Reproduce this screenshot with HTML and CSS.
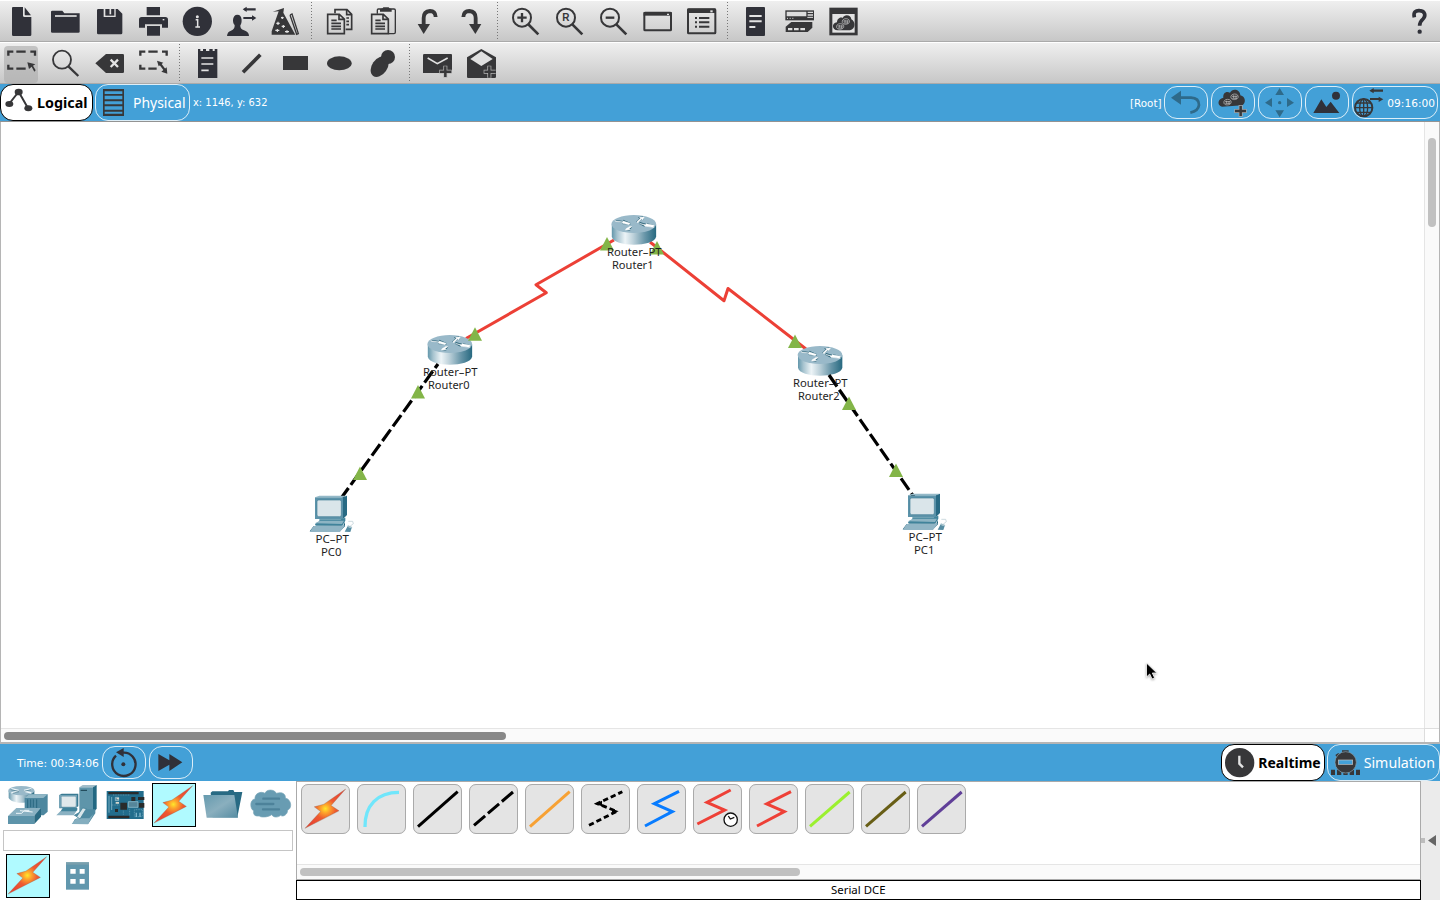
FILE: index.html
```html
<!DOCTYPE html>
<html lang="en">
<head>
<meta charset="utf-8">
<title>Network Simulator</title>
<link rel="stylesheet" href="styles.css">
</head>
<body>
<svg class="defs" width="0" height="0">
  <defs>
    <linearGradient id="metal"><stop offset="0" stop-color="#6397ab"/><stop offset=".12" stop-color="#a6c3cf"/><stop offset=".3" stop-color="#edf4f7"/><stop offset=".48" stop-color="#bed2db"/><stop offset=".75" stop-color="#6795a8"/><stop offset="1" stop-color="#276980"/></linearGradient>
    <linearGradient id="folder" x1="0" y1="0" x2="1" y2="1"><stop offset="0" stop-color="#659aae"/><stop offset=".5" stop-color="#8aafbe"/><stop offset="1" stop-color="#568ca2"/></linearGradient>
    <radialGradient id="spark"><stop offset="0" stop-color="#ffe72c"/><stop offset=".22" stop-color="#fda32c"/><stop offset=".52" stop-color="#ee5a31"/><stop offset="1" stop-color="#e94632"/></radialGradient>
    <symbol id="bolt" viewBox="0 0 124 120" overflow="visible"><path d="M123 0L79 50L103 66L0 119L47 68L28 54L57 46Z" fill="url(#spark)" stroke="#8c6a55" stroke-width="1"/></symbol>
    <g id="router">
      <path d="M-66 2V39C-62 71 62 71 67 39V2Z" fill="url(#metal)"/>
      <ellipse cy="1" rx="67" ry="27" fill="#99b9c9"/>
      <path d="M-54-11L-32-8L-32-12L-10-2L-11 4L-35 1L-32-3L-56-7ZM6-5L17-16L12-19L28-22L30-12L26-15L15-5ZM62 9L34 6L32 9L15 0L18-5L39 1L38-2L60 4ZM-25 19L-10 8L-5 11L-13 20L-9 22Z" fill="#245e74"/>
      <path d="M-57-9L-34-5L-32-8L-11-1L-14 3L-33-1L-35-5L-55-7ZM9-6L20-16L17-19L31-20L27-12L24-15L12-3ZM59 11L32 7L31 4L17-1L20 0L35 3L37 0L61 5ZM-23 15L-11 8L-6 9L-14 15L-11 18L-25 19Z" fill="#fff" stroke="#fff" stroke-width="1.5"/>
    </g>
    <g id="pc">
      <path d="M45 352L58 347H140L129 352Z" fill="#94b9c8"/><path d="M45 352H129V417H45Z" fill="#5c93aa"/><path d="M129 352L141 347V405L129 417Z" fill="#286a84"/>
      <rect x="51" y="360" width="73" height="50" rx="5" fill="#dae5ea" stroke="#447e95" stroke-width="2"/>
      <path d="M58 418H122L136 413V422L127 437H47L45 432L58 424Z" fill="#40839b"/><path d="M45 430L60 422H132L126 432Z" fill="#8db4c3"/><path d="M41 438L130 437L135 425V439L123 451L29 454Z" fill="#25657c"/><path d="M41 438H124L131 433L134 438L120 456H29Z" fill="#91b5c5"/><path d="M134 455L142 440L155 444L151 456Z" fill="#568da3"/><path d="M141 440L144 436L157 441L155 445Z" fill="#9ebdc9"/><path d="M145 424H158L160 431L149 440" fill="none" stroke="#b3c8d0" stroke-width="2"/>
    </g>
    <path id="up" d="M0 0L7 13.5H-7Z" fill="#83b548"/>
    <g id="gear"><path d="M0-9C8-9 12-4 10 2C7 9-8 10-11 3C-13-4-8-9 0-9Z" fill="none" stroke="#c9c9c9" stroke-width="2"/><path d="M-8-2H8M-7 4H7M-3-5V3M4-4V5" stroke="#c9c9c9" stroke-width="2"/></g>
  </defs>
</svg>

<header class="toolbar">
  <svg class="tool" viewBox="-3 3 132 120"><path d="M36 24Q36 21 39 21H69V48Q70 51 73 51H94V104Q94 108 90 108H40Q36 108 36 104Z"/><path d="M74 22L93 46H76Q74 46 74 43Z"/></svg>
  <svg class="tool" viewBox="129 3 132 120"><path d="M153 35Q153 32 157 32H187L193 40H239V95Q239 98 235 98H157Q153 98 153 95Z"/><path class="light" d="M165 48H230" stroke-width="5"/></svg>
  <svg class="tool" viewBox="261 3 132 120"><path d="M291 31Q291 27 295 27H311V51H347V27H353L367 41V99Q367 103 363 103H295Q291 103 291 99Z"/><path d="M316 27H343V47H316Z"/><path class="light" d="M331 27V43" stroke-width="5"/></svg>
  <svg class="tool" viewBox="393 3 132 120"><path d="M440 21H480V46H440ZM417 59Q417 51 425 51H496Q504 51 504 59V83H486V73H435V83H417ZM441 78H480V107H441Z"/><path class="light" d="M488 59H493" stroke-width="4"/></svg>
  <svg class="tool" viewBox="525 3 132 120"><circle cx="592" cy="64" r="44"/><circle class="white" cx="592" cy="50" r="4.5"/><path class="light" d="M587 59H593V81M586 81H600" stroke-width="4.5"/></svg>
  <svg class="tool" viewBox="657 3 132 120"><path d="M704 75C696 68 697 44 712 44C728 44 727 69 721 76Q720 88 732 91Q747 96 747 108H681Q682 95 693 92Q705 88 704 75Z"/><path class="line" d="M734 28H767M730 54H761" stroke-width="6.5"/><path d="M728 28L740 20V36ZM769 54L756 46V62Z"/></svg>
  <svg class="tool ash" viewBox="789 3 132 120"><path d="M818 35L852 24L850 38L880 94L886 104H815V94L836 34Z"/><path class="light" d="M847 50V57M843 53H851M834 65V75M829 70H839M850 75V84M845 79H855M832 87V96M826 91H838M861 91V99M855 95H867" stroke-width="3.5"/><path class="line" d="M870 45L890 103L895 101L876 42L870 45" stroke-width="4"/></svg>
  <i class="dots"></i>
  <svg class="tool ash" viewBox="51 3 132 120"><path class="line" d="M105 40V29H141L155 43V88H137" stroke-width="5"/><path class="line" d="M140 29V44H154M139 54H147M139 64H147M139 74H147M83 43H118L133 57V101H83ZM117 43V58H132M94 61H110M94 70H123M94 79H123M94 87H123" stroke-width="5"/></svg>
  <svg class="tool ash" viewBox="183 3 132 120"><path class="line" d="M232 41V30Q232 27 235 27H282Q286 27 286 31V97Q286 101 282 101H266" stroke-width="4"/><path d="M240 27Q249 27 250 22H266Q268 27 275 27V35H240Z"/><path class="line" d="M215 43H250L265 57V101H215ZM249 43V58H264M226 61H242M226 70H255M226 79H255M226 87H255" stroke-width="5"/></svg>
  <svg class="tool ash" viewBox="315 3 132 120"><path class="line" d="M371 77V54Q371 34 390 33Q406 33 407 51" stroke-width="11.5"/><path d="M353 72H390L371 102Z"/></svg>
  <svg class="tool ash" viewBox="447 3 132 120"><path class="line" d="M490 51Q491 33 508 33Q527 34 527 54V77" stroke-width="11.5"/><path d="M507 72H544L526 102Z"/></svg>
  <i class="dots"></i>
  <svg class="tool ash" viewBox="609 3 132 120"><circle class="line" cx="666" cy="53" r="27" stroke-width="6"/><path class="line" d="M652 53H680M666 39V67" stroke-width="7"/><path class="line" d="M684 72L715 103" stroke-width="8"/></svg>
  <svg class="tool ash" viewBox="741 3 132 120"><circle class="line" cx="798" cy="53" r="27" stroke-width="6"/><text x="787" y="64" class="reset">R</text><path class="line" d="M817 73L847 103" stroke-width="8"/></svg>
  <svg class="tool ash" viewBox="3 3 132 120"><circle class="line" cx="60" cy="53" r="27" stroke-width="6"/><path class="line" d="M47 53H73" stroke-width="7"/><path class="line" d="M79 73L109 103" stroke-width="8"/></svg>
  <svg class="tool ash" viewBox="135 3 132 120"><rect class="line" x="163" y="38" width="80" height="53" rx="2" stroke-width="6"/><path d="M161 36H245V47H161Z"/><path class="light" d="M231 43H237" stroke-width="4"/></svg>
  <svg class="tool ash" viewBox="267 3 132 120"><rect class="line" x="294" y="28" width="82" height="72" rx="2" stroke-width="6"/><path d="M292 26H377V39H292Z"/><path class="light" d="M361 34H368" stroke-width="6"/><path class="line" d="M315 54H321M327 54H358M315 67H321M327 67H358M315 80H321M327 80H358" stroke-width="6"/></svg>
  <i class="dots"></i>
  <svg class="tool" viewBox="429 3 132 120"><rect x="468" y="21" width="57" height="87" rx="3"/><path class="light" d="M478 48H515M478 64H515M478 81H496" stroke-width="6"/></svg>
  <svg class="tool ash" viewBox="561 3 132 120"><path d="M586 31H672V61H586Z"/><path d="M590 35H649V49H590ZM653 35H669V39H653ZM653 43H669V47H653Z" fill="#ddd"/><path class="light" d="M591 55H594M599 55H602M607 55H610M652 52H669" stroke-width="3"/><path d="M587 80L604 66H667V83L653 96H587Z"/><path d="M594 84H607V91H594ZM612 84H626V91H612ZM631 84H645V91H631Z" fill="#ddd"/></svg>
  <svg class="tool ash" viewBox="693 3 132 120"><path d="M718 23H803V106H718Z"/><path d="M727 42H794V98H727Z" fill="#e2e2e2"/><path d="M743 91C725 91 724 68 741 67C741 54 754 50 758 54C763 42 783 44 784 58C797 64 798 87 780 91Z"/><use href="#gear" x="768" y="65"/><use href="#gear" x="751" y="80"/></svg>
  <svg class="tool help" viewBox="831 3 132 120"><path class="line" d="M883 52C879 35 888 31 899 32C916 33 918 48 909 57Q899 66 899 77" stroke-width="11"/><circle cx="899" cy="95" r="6.5"/></svg>
</header>

<section class="toolbar second">
  <svg class="tool active" viewBox="-3 129 132 120"><rect class="tile" x="12" y="138" width="102" height="111" rx="12"/><path class="line" d="M25 167V155H40M49 155H77M91 155H105V167M25 194V206H40M49 206H77" stroke-width="7"/><path d="M82 187L106 193L99 197L107 211L103 215L95 200L87 207Z"/></svg>
  <svg class="tool ash" viewBox="129 129 132 120"><circle class="line" cx="186" cy="179" r="27" stroke-width="5.5"/><path class="line" d="M205 199L235 228" stroke-width="7"/></svg>
  <svg class="tool ash" viewBox="261 129 132 120"><path d="M286 190L318 162H368Q372 162 372 166V215Q372 219 368 219H318Z"/><path class="light" d="M332 179L354 201M354 179L332 201" stroke-width="7"/></svg>
  <svg class="tool ash" viewBox="393 129 132 120"><path class="line" d="M421 167V155H436M445 155H473M486 155H500V167M421 194V206H436M445 206H470M477 187L498 215" stroke-width="7"/><path d="M471 182L490 188L476 199ZM502 221L484 215L500 202Z"/></svg>
  <i class="dots"></i>
  <svg class="tool" viewBox="555 129 132 120"><path d="M594 147H601V153H609V147H618V153H628V147H638V153H644V147H652V234H594Z"/><path class="light" d="M604 174H640M604 192H640M604 211H626" stroke-width="5"/></svg>
  <svg class="tool ash" viewBox="687 129 132 120"><path class="line" d="M729 217L781 164" stroke-width="11"/></svg>
  <svg class="tool ash" viewBox="819 129 132 120"><rect x="849" y="168" width="75" height="42"/></svg>
  <svg class="tool ash" viewBox="51 129 132 120"><ellipse cx="118" cy="190" rx="37" ry="21"/></svg>
  <svg class="tool ash" viewBox="183 129 132 120"><ellipse cx="239" cy="200" rx="23" ry="34" transform="rotate(35 239 200)"/><circle cx="264" cy="171" r="21"/></svg>
  <i class="dots"></i>
  <svg class="tool ash" viewBox="345 129 132 120"><path d="M373 162H453Q456 162 456 165V219H369V166Q369 162 373 162Z"/><path class="light" d="M383 174L412 191L443 174" stroke-width="5"/><path class="halo" d="M418 215H455M436 197V233" stroke-width="12"/><path class="line" d="M420 215H453M436 199V231" stroke-width="7.5"/></svg>
  <svg class="tool ash" viewBox="477 129 132 120"><path d="M501 172L544 147L588 172V231Q588 234 584 234H505Q501 234 501 231Z"/><path d="M511 177L544 154L578 177L544 198Z" fill="#e0e0e0"/><path class="halo" d="M551 215H587M568 197V233" stroke-width="12"/><path class="line" d="M553 215H588M568 199V233" stroke-width="7.5"/></svg>
</section>

<nav class="bluebar">
  <div class="pill selected logical"><svg class="labelart" width="93" height="37"><g class="ink" transform="translate(0 -84) scale(.33333)"><path class="line" d="M27 312L56 275L85 326" stroke-width="6"/><ellipse cx="28" cy="312" rx="12" ry="9"/><ellipse cx="56" cy="276" rx="12" ry="10"/><ellipse cx="85" cy="325" rx="12" ry="9"/></g><text class="strong" x="37" y="24" textLength="50.5" lengthAdjust="spacingAndGlyphs">Logical</text></svg></div>
  <div class="pill physical"><svg class="labelart" width="95" height="37"><g class="ink" transform="translate(-95 -84) scale(.33333)"><path d="M309 267H372V348H309Z"/><path d="M314 274H367V282H314ZM314 287H367V298H314ZM314 304H367V313H314ZM314 319H367V329H314ZM314 335H367V341H314Z" fill="#43a0d7"/></g><text class="medium" x="38" y="24" textLength="52.5" lengthAdjust="spacingAndGlyphs">Physical</text></svg></div>
  <svg class="coord" width="80" height="37"><text class="small" x="0" y="22" textLength="74.5" lengthAdjust="spacingAndGlyphs">x: 1146, y: 632</text></svg>
  <svg class="root" width="34" height="37"><text class="small" x="0" y="23" textLength="31.5" lengthAdjust="spacingAndGlyphs">[Root]</text></svg>
  <div class="actions">
    <div class="pill action"><svg class="ink" viewBox="132 258 132 99"><path class="line faded" d="M178 293H213Q237 294 237 315Q235 333 211 338" stroke-width="8"/><path d="M153 293L183 272V314Z" fill="#2e6a8a"/></svg></div>
    <div class="pill action"><svg class="ink" viewBox="273 258 132 99"><path d="M306 320C291 316 292 297 310 293C308 278 320 272 330 278C337 263 361 268 361 286C378 290 378 310 367 316Z"/><use href="#gear" x="344" y="291"/><use href="#gear" x="323" y="307"/><path d="M343 333H380M362 315V350" stroke="#aaa" stroke-width="12"/><path class="line" d="M345 333H378M362 317V348" stroke-width="7.5"/></svg></div>
    <div class="pill action"><svg viewBox="414 258 132 99"><path d="M479 264L492 285H466ZM435 308L456 294V321ZM522 308L501 294V321ZM479 352L466 331H492Z" fill="#2e6a8a"/><circle cx="479" cy="308" r="5" fill="#2e6a8a"/></svg></div>
    <div class="pill action"><svg class="navy" viewBox="555 258 132 99"><circle cx="648" cy="287" r="12"/><path d="M580 339L604 298L619 321L632 305L658 339Z"/></svg></div>
    <div class="pill network"><svg class="ink" width="86" height="33" viewBox="696 258 258 99"><circle class="line" cx="731" cy="323" r="26" stroke-width="6"/><ellipse class="line" cx="731" cy="323" rx="12" ry="26" stroke-width="4"/><path class="line" d="M731 297V349M705 323H757M710 309H752M710 337H752" stroke-width="4"/><path class="line" d="M758 272H789M750 297H778" stroke-width="6.5"/><path d="M748 272L761 264V280ZM790 298L776 290V306Z"/><text class="clocktext" x="802" y="321" textLength="143" lengthAdjust="spacingAndGlyphs">09:16:00</text></svg></div>
  </div>
</nav>

<main class="workspace">
  <svg class="network-map" viewBox="1 122 1424 606">
    <g class="serial"><path d="M466 338.5L546.3 292.7L536 284.7L614 240"/><path d="M650 242L724 300.7L728 288.5L806 349"/></g>
    <use href="#router" transform="translate(633.8 223.7) scale(.33333)"/>
    <use href="#router" transform="translate(449.8 343.7) scale(.33333)"/>
    <use href="#router" transform="translate(820 354.7) scale(.33333)"/>
    <g class="crossover"><path d="M438 364L342 497"/><path d="M829 375L914 497"/></g>
    <use href="#pc" transform="translate(300 380) scale(.33333)"/>
    <use href="#pc" transform="translate(893 378) scale(.33333)"/>
    <use href="#up" x="475" y="327.3"/><use href="#up" x="607" y="237"/><use href="#up" x="657" y="241"/><use href="#up" x="795" y="334.5"/><use href="#up" x="849" y="396.5"/><use href="#up" x="418" y="385"/><use href="#up" x="360" y="466.5"/><use href="#up" x="896" y="463.5"/>
    <g class="devicetext">
      <text x="607" y="256" textLength="54.5" lengthAdjust="spacingAndGlyphs">Router–PT</text><text x="612" y="269" textLength="41.5" lengthAdjust="spacingAndGlyphs">Router1</text>
      <text x="423" y="376" textLength="54.5" lengthAdjust="spacingAndGlyphs">Router–PT</text><text x="428" y="389" textLength="41.5" lengthAdjust="spacingAndGlyphs">Router0</text>
      <text x="793" y="387" textLength="54.5" lengthAdjust="spacingAndGlyphs">Router–PT</text><text x="798" y="400" textLength="41.5" lengthAdjust="spacingAndGlyphs">Router2</text>
      <text x="315.5" y="543" textLength="33.5" lengthAdjust="spacingAndGlyphs">PC–PT</text><text x="321" y="556" textLength="20.5" lengthAdjust="spacingAndGlyphs">PC0</text>
      <text x="908.5" y="541" textLength="33.5" lengthAdjust="spacingAndGlyphs">PC–PT</text><text x="914" y="554" textLength="20.5" lengthAdjust="spacingAndGlyphs">PC1</text>
    </g>
    <path class="cursor" d="M1146.5 663V677L1149.7 674L1152.1 679L1154.6 677.8L1152.3 673H1156.8Z"/>
  </svg>
  <div class="vertical"><i></i></div>
  <div class="horizontal"><i></i></div>
  <div class="corner"></div>
</main>

<section class="bluebar timebar">
  <svg class="elapsed" width="102" height="37"><text class="small" x="17" y="23" textLength="82" lengthAdjust="spacingAndGlyphs">Time: 00:34:06</text></svg>
  <div class="pill action"><svg class="navy" viewBox="306 78 132 99"><path class="line" d="M348 107A35 35 0 1 0 368 98" stroke-width="7"/><path d="M348 97L371 84V111Z"/><circle cx="370" cy="133" r="6"/></svg></div>
  <div class="pill action"><svg class="navy" viewBox="447 78 132 99"><path d="M475 102L508 121V102L547 127L508 153V134L475 153Z"/></svg></div>
  <div class="pill selected realtime"><svg class="labelart" width="104" height="37" viewBox="273 282 312 111"><circle class="ash" cx="329" cy="338" r="44"/><path class="light" d="M328 317V341L339 352" stroke-width="7"/><text class="strong scaled" x="385" y="354" textLength="187" lengthAdjust="spacingAndGlyphs">Realtime</text></svg></div>
  <div class="pill simulation"><svg class="labelart ink" width="113" height="37" viewBox="591 282 339 111"><path d="M603 359H615V375H603ZM621 359H634V375H621ZM640 362H653V375H640ZM659 359H672V375H659ZM678 359H690V375H678ZM636 301H656V310H636ZM616 315L625 309L631 317L622 323Z"/><circle cx="647" cy="337" r="32" stroke="#89a8b8" stroke-width="2"/><rect x="625" y="330" width="43" height="13" fill="#43a0d7" stroke="#c5c5c5" stroke-width="2"/><text class="medium scaled" x="701" y="354" textLength="214" lengthAdjust="spacingAndGlyphs">Simulation</text></svg></div>
</section>

<footer class="inventory">
  <section class="devices">
    <div class="categories">
      <svg viewBox="18 189 132 132"><path d="M26 212V234C36 253 92 253 103 234V212Z" fill="url(#metal)"/><g transform="translate(64 212)"><ellipse rx="39" ry="14" fill="#99b9c9"/><path d="M-30-6L-8-1M30-6L8-1M-30 7L-8 1M30 7L8 1" stroke="#eef6f9" stroke-width="4"/><path d="M-32-3L-8 2M29-3L8 2M-26 8L-7 3" stroke="#245e74" stroke-width="1.5"/></g><path d="M74 234L90 223H143V275L131 286H74Z" fill="#4d879f"/><path d="M74 234L88 223H143L130 234Z" fill="#91b7c6"/><path d="M83 238V282M92 238V262M100 238V262M110 238V266" stroke="#296881" stroke-width="3"/><path d="M24 288L49 264H123L103 288Z" fill="#8ab1c2"/><path d="M24 288H103V312H24Z" fill="#5d94aa"/><path d="M103 288L123 264V290L103 312Z" fill="#2b6a82"/><path d="M48 280H65L73 271H88M60 272L98 276" stroke="#eef6f9" stroke-width="3" fill="none"/></svg>
      <svg viewBox="164 189 132 132"><path d="M237 202L247 195H289L280 202Z" fill="#a1bdc9"/><path d="M237 202H278V278H237Z" fill="#5e95aa"/><path d="M278 202L289 195V266L278 278Z" fill="#226882"/><path d="M241 211H260" stroke="#173f4e" stroke-width="3"/><path d="M177 225L184 221H234V259L224 265H177Z" fill="#397a92"/><path d="M177 225H230V263H177Z" fill="#73a2b6"/><rect x="183" y="229" width="44" height="32" rx="3" fill="#e0e8eb" stroke="#447e95"/><path d="M187 264H231V271L223 278H178Z" fill="#42839b"/><path d="M180 274H228L220 286H168Z" fill="#8ab1c2"/><path d="M220 286L251 268H285V280L264 311H216L224 297H240Z" fill="#4f8aa1"/><path d="M214 312L228 295H267L279 282L263 313Z" fill="#84aebf"/><path d="M229 290L247 264L258 266L239 297Z" fill="#d9e6ea" stroke="#397a92" stroke-width="2"/></svg>
      <svg viewBox="310 189 132 132"><path d="M321 213H432V297H321Z" fill="#226d8c"/><g fill="#292b2b"><path d="M326 216H417V223H326ZM326 287H389V295H326ZM362 248H382V269H362ZM395 231H407V243H395ZM415 231H434V240H415ZM417 249H434V263H417ZM346 267H355V276H346Z"/></g><path d="M328 228V278M336 231V270M347 232H357V242H347ZM386 245H415V262H386Z" fill="#55869a" stroke="#a1cad8" stroke-width="2"/><path d="M340 225H391M337 255H359M371 272V284M390 268V288M404 269H428V290H404Z" fill="none" stroke="#70a6bd" stroke-width="2" stroke-dasharray="3 2"/><path d="M351 233H358V238H351ZM348 246H358V251H348Z" fill="#d6d6cc"/><path d="M408 278H412V291H408ZM419 278H423V291H419Z" fill="#7fb6cb"/></svg>
      <svg class="picked" viewBox="456 189 132 132"><use href="#bolt" x="462" y="195" width="117" height="117"/></svg>
      <svg viewBox="602 189 132 132"><path d="M631 218L636 214H683L686 210H699L702 216H726L711 292H637Z" fill="#286a83"/><path d="M609 225H702L713 293H619Z" fill="url(#folder)"/></svg>
      <svg viewBox="748 189 132 132"><path d="M779 288C762 290 760 280 762 272C750 267 750 238 766 237C764 221 783 212 796 220C800 207 824 207 830 220C848 214 859 223 857 234C876 238 878 266 864 270C864 284 850 292 843 286C834 294 820 292 816 284C807 292 783 293 779 288Z" fill="#689cb2" stroke="#7ba8ba" stroke-width="2"/><path d="M791 236H838M770 252H821M790 268H838" stroke="#4d829a" stroke-width="7" stroke-linecap="round"/></svg>
    </div>
    <div class="searchbox"></div>
    <div class="types"><svg class="picked" viewBox="18 402 132 132"><use href="#bolt" x="24" y="408" width="117" height="117"/></svg><svg viewBox="165 402 132 132"><path d="M198 427H267V509H198Z" fill="#6197ad"/><path d="M198 427H267V434H198Z" fill="#799fad"/><path d="M211 447H227V461H211ZM239 447H254V461H239ZM211 477H227V491H211ZM239 477H254V491H239Z" fill="#fff"/></svg></div>
  </section>
  <section class="connections">
    <div class="connectionbox">
      <div class="cables">
        <svg viewBox="33 27 147 150"><use href="#bolt" x="45" y="42" width="123" height="119"/></svg>
        <svg viewBox="201 27 147 150"><path d="M225 156C224 91 262 52 327 52" stroke="#70e6fb" stroke-width="10"/></svg>
        <svg viewBox="369 27 147 150"><path d="M384 155L503 50" stroke="#000" stroke-width="9"/></svg>
        <svg viewBox="537 27 147 150"><path d="M552 151L669 51" stroke="#000" stroke-width="9" stroke-dasharray="44 11"/></svg>
        <svg viewBox="705 27 147 150"><path d="M720 155L839 50" stroke="#f7a134" stroke-width="9"/></svg>
        <svg viewBox="873 27 147 150"><path d="M897 151L980 109L922 86L997 50" stroke="#000" stroke-width="8.5" stroke-dasharray="16 9"/><path d="M916 87L936 77V94ZM986 109L966 101V118Z" fill="#000"/></svg>
        <svg viewBox="21 27 147 150"><path d="M45 153L127 110L73 86L147 49" stroke="#087cff" stroke-width="9"/></svg>
        <svg viewBox="189 27 147 150"><path d="M202 147L284 105L231 82L302 45" stroke="#ee4037" stroke-width="9"/><circle cx="302" cy="134" r="20" fill="#fff" stroke="#111" stroke-width="4"/><path d="M295 123L301 132L313 127" stroke="#111" stroke-width="4"/></svg>
        <svg viewBox="357 27 147 150"><path d="M381 153L463 110L410 87L483 50" stroke="#ee4037" stroke-width="9"/></svg>
        <svg viewBox="525 27 147 150"><path d="M540 154L659 51" stroke="#9bf02f" stroke-width="9"/></svg>
        <svg viewBox="693 27 147 150"><path d="M708 154L827 51" stroke="#685e16" stroke-width="9"/></svg>
        <svg viewBox="861 27 147 150"><path d="M876 154L995 51" stroke="#603f98" stroke-width="9"/></svg>
      </div>
      <div class="cablescroll"><i></i></div>
    </div>
    <div class="connectionname"><svg width="56" height="18"><text x="0" y="13" textLength="54.5" lengthAdjust="spacingAndGlyphs">Serial DCE</text></svg></div>
  </section>
  <aside class="drawer"><i></i><svg width="9" height="11"><path d="M0 5.5L8 0V11Z"/></svg></aside>
</footer>
</body>
</html>
```

FILE: styles.css
```css
* { box-sizing: border-box; }
body { margin: 0; width: 1440px; height: 900px; overflow: hidden; background: #fff; font: 11px "Noto Sans", "DejaVu Sans", sans-serif; display: flex; flex-direction: column; }
svg { display: block; flex: none; }
svg text { font-family: "Noto Sans", "DejaVu Sans", sans-serif; }
.defs { position: absolute; }
.toolbar { height: 42px; flex: none; display: flex; background: linear-gradient(#efefef, #c7c7c7); border-top: 1px solid #fff; border-bottom: 1px solid #aaa; }
.toolbar .tool:first-child { margin-left: -1px; }
.tool { width: 44px; height: 40px; fill: #303139; color: #303139; }
.tool.ash, .tool.active, .ink { fill: #373739; color: #373739; }
.navy { fill: #303139; color: #303139; }
.line { fill: none; stroke: currentColor; }
.light { fill: none; stroke: #e3e3e3; }
.halo { fill: none; stroke: #b5b5b5; }
.white { fill: #e3e3e3; }
.tile { fill: #adadad; opacity: .65; }
.tool .reset { font-size: 30px; font-weight: bold; font-family: "Liberation Sans", sans-serif; }
.dots { width: 10px; height: 40px; padding-left: 4px; flex: none; }
.dots::before { content: ""; display: block; width: 1px; height: 37px; margin-top: 1px; background: repeating-linear-gradient(#777 0 1px, transparent 1px 3px); }
.help { margin-left: auto; margin-right: -1px; }
.bluebar { height: 38px; flex: none; display: flex; background: #43a0d7; border-bottom: 1px solid #939393; }
.pill { flex: none; border: 1px solid #dceef8; border-radius: 13px; overflow: hidden; }
.pill.selected { background: #fff; border-color: #000; }
.pill > svg { margin: -1px; }
.logical { width: 93px; height: 37px; }
.physical { width: 95px; height: 37px; margin-left: 2px; }
.coord { margin-left: 3px; }
.root { margin-left: auto; }
.actions { display: flex; gap: 3px; padding-top: 2px; padding-right: 2px; }
.action { width: 44px; height: 33px; }
.action svg { width: 44px; height: 33px; }
.network { width: 86px; height: 33px; }
svg .small { font-family: "DejaVu Sans", sans-serif; font-size: 10.5px; fill: #fff; }
.strong { font-size: 14px; font-weight: 700; fill: #000; }
.medium { font-size: 14px; fill: #fff; }
.scaled { font-size: 42px; }
svg .clocktext { font-family: "DejaVu Sans", sans-serif; font-size: 32px; fill: #fff; }
.faded { stroke: #2e6a8a; }
.workspace { height: 622px; flex: none; display: grid; grid-template-columns: 1423px 15px; grid-template-rows: 606px 14px; border: solid #b5b5b5; border-width: 0 1px 2px; }
.network-map { width: 1424px; height: 606px; }
.serial path { fill: none; stroke: #ec4036; stroke-width: 3; stroke-linejoin: round; }
.crossover path { fill: none; stroke: #000; stroke-width: 3.2; stroke-dasharray: 14 4; stroke-dashoffset: 9; }
.crossover path:last-child { stroke-dashoffset: 0; }
.devicetext { font-size: 11px; fill: #1e1e1e; }
.cursor { fill: #000; stroke: #fff; stroke-width: .8; filter: drop-shadow(0 1px 1px #aaa); }
.vertical { background: #fafafa; border-left: 1px solid #e5e5e5; padding: 16px 0 0 3px; }
.vertical i { display: block; width: 8px; height: 89px; border-radius: 4px; background: #c1c1c1; }
.horizontal { background: #fafafa; border-top: 1px solid #e5e5e5; padding: 3px 0 0 3px; }
.horizontal i { display: block; width: 502px; height: 8px; border-radius: 4px; background: #888; }
.corner { border: solid #ddd; border-width: 1px 0 0 1px; }
.timebar { height: 37px; border: 0; }
.timebar .action { margin: 2px 3px 0 0; }
.realtime { width: 104px; height: 37px; margin-left: auto; }
.realtime .ash { fill: #373739; }
.simulation { width: 113px; height: 37px; margin-left: 2px; }
.inventory { height: 119px; flex: none; display: flex; }
.devices { width: 296px; padding: 2px 3px 0; }
.categories { display: flex; gap: 4.67px; padding-left: 3px; height: 44px; }
.categories svg, .types svg { width: 44px; height: 44px; }
.picked { background: #b0faff; outline: 1px solid #000; outline-offset: -1px; }
.searchbox { height: 21px; margin-top: 3px; border: 1px solid #c5c5c5; }
.types { display: flex; gap: 5px; padding-left: 3px; margin-top: 3px; }
.connections { width: 1125px; }
.connectionbox { height: 99px; border: 1px solid #aaa; display: flex; flex-direction: column; justify-content: space-between; }
.cables { display: flex; gap: 7px; padding: 2px 0 0 4px; }
.cables svg { width: 49px; height: 50px; fill: none; background: #e4e4e4; border-radius: 7px; outline: 1px solid #aaa; outline-offset: -1px; }
.cablescroll { height: 15px; background: #fafafa; border-top: 1px solid #e5e5e5; padding: 3px 0 0 3px; }
.cablescroll i { display: block; width: 500px; height: 8px; border-radius: 4px; background: #c1c1c1; }
.connectionname { height: 20px; border: 1px solid #000; display: flex; justify-content: center; }
.drawer { width: 19px; background: #ebebeb; display: flex; align-items: center; gap: 3px; }
.drawer i { width: 4px; height: 5px; background: #bdbdbd; }
.drawer svg { fill: #666; }
```
